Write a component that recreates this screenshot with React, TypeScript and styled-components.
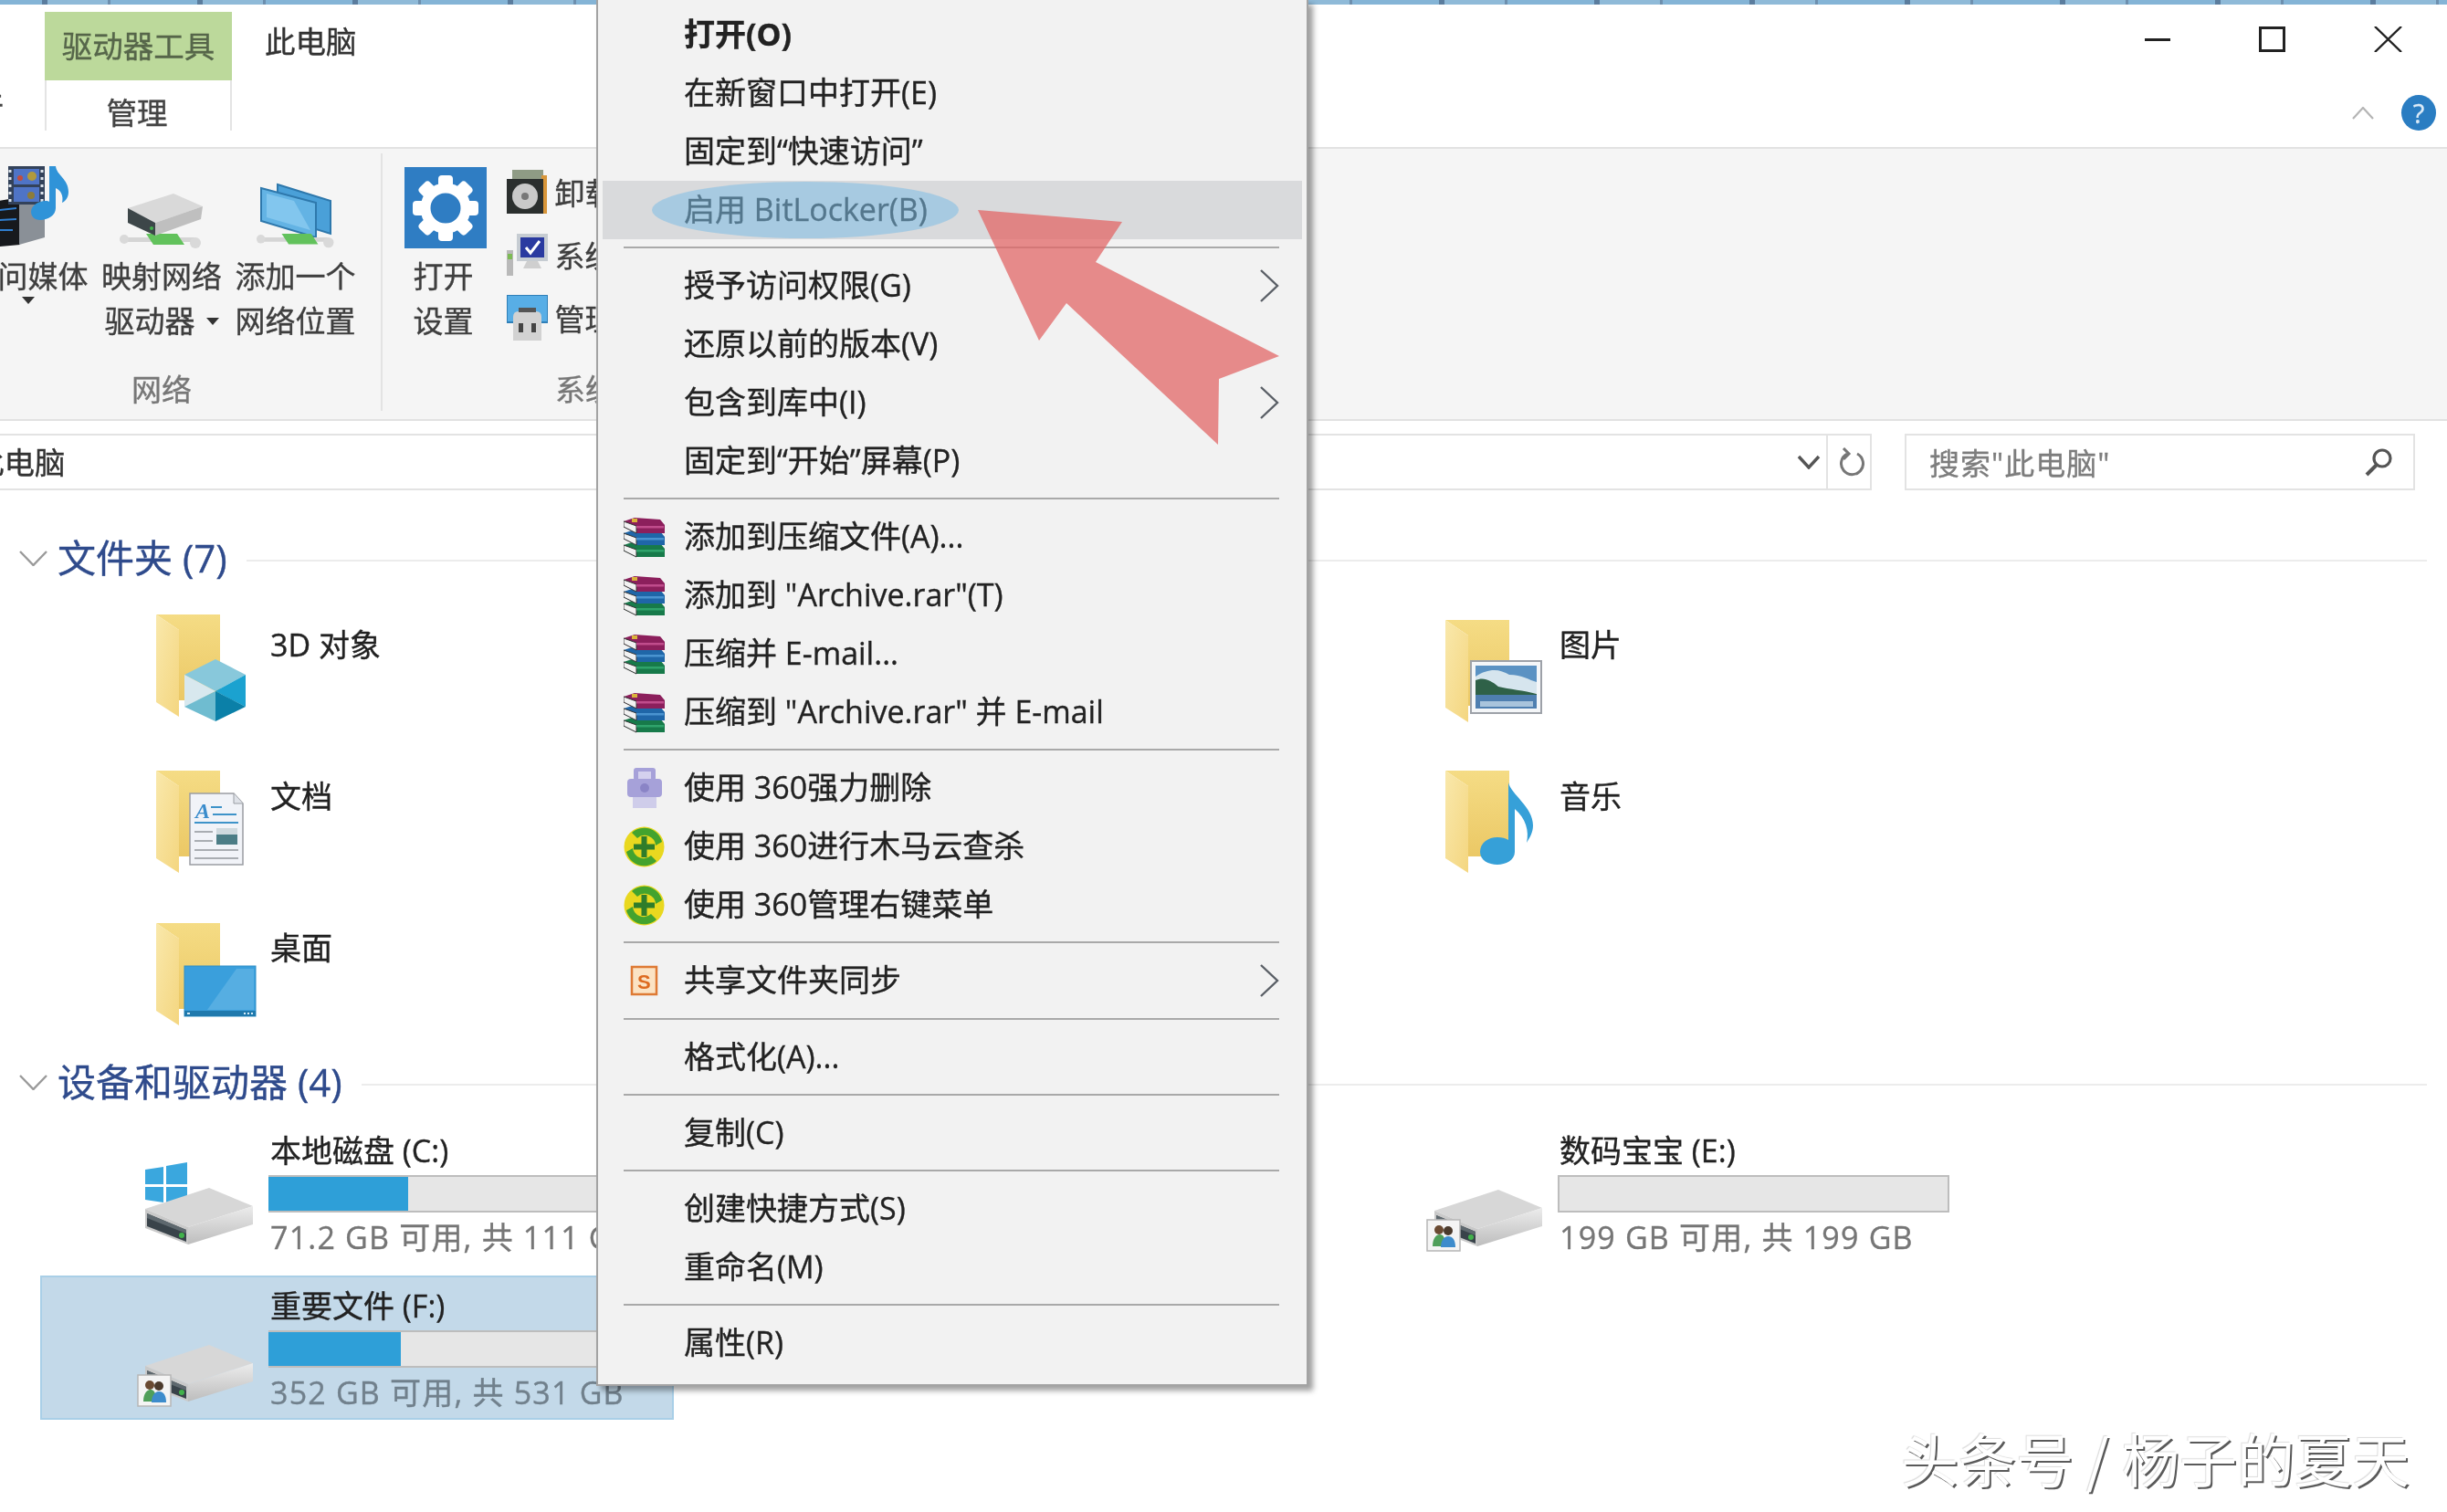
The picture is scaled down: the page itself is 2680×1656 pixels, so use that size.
import React from "react";
import styled, { createGlobalStyle } from "styled-components";

const Global = createGlobalStyle`
  html, body { margin: 0; padding: 0; background: #fff; width: 2680px; height: 1656px; overflow: hidden; }
  * { box-sizing: border-box; }
`;

const Page = styled.div`
  position: relative;
  width: 2680px;
  height: 1656px;
  overflow: hidden;
  background: #fff;
  font-family: "Open Sans", "Noto Sans CJK SC", sans-serif;
  font-size: 33.5px;
  color: #2c2c2c;
`;
const Screen = styled.div`
  position: relative;
  width: 2680px;
  height: 1656px;
  overflow: hidden;
  filter: blur(0.7px);
  -webkit-text-stroke: 0.35px currentColor;
`;
const TopStrip = styled.div`
  height: 5px;
  background: repeating-linear-gradient(90deg, #84b4d6 0 46px, #5b7d9e 46px 52px, #8fbad8 52px 118px, #6d8fae 118px 121px, #84b4d6 121px 170px);
`;

/* title row */
const TitleRow = styled.div`
  height: 156px;
  display: flex;
  align-items: flex-start;
  background: #fff;
`;
const LeftStub = styled.div`
  width: 49px;
  height: 138px;
  display: flex;
  align-items: flex-end;
  overflow: hidden;
`;
const StubText = styled.span`
  margin-left: -63px;
  line-height: 62px;
  white-space: nowrap;
  color: #444;
`;
const ContextTab = styled.div`
  width: 205px;
  margin-top: 8px;
  display: flex;
  flex-direction: column;
`;
const ContextHead = styled.div`
  height: 75px;
  background: #bcd99b;
  color: #56664a;
  text-align: center;
  line-height: 74px;
`;
const ContextBody = styled.div`
  height: 55px;
  border: solid #e4e4e4;
  border-width: 0 2px;
  padding-right: 3px;
  text-align: center;
  color: #444;
  line-height: 70px;
`;
const PlainTab = styled.div`
  margin: 18px 0 0 36px;
  line-height: 44px;
  color: #333;
`;
const TitleRight = styled.div`
  margin-left: auto;
  display: flex;
  flex-direction: column;
  align-items: flex-end;
  padding-top: 24px;
`;
const WindowControls = styled.div`
  display: flex;
  align-items: center;
  gap: 97px;
  margin-right: 49px;
`;
const RibbonTools = styled.div`
  display: flex;
  align-items: center;
  gap: 30px;
  margin: 47px 12px 0 0;
`;
const HelpDot = styled.div`
  width: 38px;
  height: 39px;
  border-radius: 50%;
  background: #2a7dc2;
  color: #dcebf7;
  font-size: 29px;
  line-height: 39px;
  text-align: center;
`;

/* ribbon */
const Ribbon = styled.div`
  height: 300px;
  display: flex;
  align-items: stretch;
  background: #f5f5f5;
  border: solid #e2e2e2;
  border-width: 2px 0;
  color: #3f3f3f;
  font-size: 33px;
  overflow: hidden;
`;
const Group = styled.div<{ $w: number; $ml?: number; $pl: number }>`
  flex: none;
  width: ${(p) => p.$w}px;
  margin-left: ${(p) => p.$ml ?? 0}px;
  padding: 9px 0 12px ${(p) => p.$pl}px;
  display: flex;
  flex-direction: column;
`;
const GroupRow = styled.div`
  display: flex;
  align-items: flex-start;
  gap: 15.5px;
`;
const GroupLabel = styled.div<{ $center?: boolean }>`
  margin-top: auto;
  line-height: 40px;
  color: #777;
  align-self: ${(p) => (p.$center ? "stretch" : "flex-start")};
  text-align: ${(p) => (p.$center ? "center" : "left")};
  margin-left: ${(p) => (p.$center ? "-28px" : "165px")};
`;
const GroupDivider = styled.div`
  flex: none;
  width: 2px;
  margin: 5px 0 9px;
  background: #e3e3e3;
`;
const RibbonBtn = styled.div<{ $w: number }>`
  flex: none;
  width: ${(p) => p.$w}px;
  display: flex;
  flex-direction: column;
  align-items: center;
`;
const IconSlot = styled.div`
  height: 100px;
  display: flex;
  align-items: flex-end;
  justify-content: center;
`;
const BtnLines = styled.div<{ $nudge?: number }>`
  margin-top: 6px;
  margin-right: ${(p) => p.$nudge ?? 0}px;
  line-height: 49px;
  text-align: center;
  white-space: nowrap;
`;
const Caret = styled.span<{ $block?: boolean }>`
  display: ${(p) => (p.$block ? "block" : "inline-block")};
  width: 0;
  height: 0;
  border: solid transparent;
  border-width: 8px 7px 0;
  border-top-color: #333;
  margin: ${(p) => (p.$block ? "-2px auto 0" : "0 0 6px 12px")};
  vertical-align: middle;
`;
const SmallList = styled.div`
  margin: 3px 0 0 6px;
  display: flex;
  flex-direction: column;
`;
const SmallItem = styled.div`
  height: 69px;
  display: flex;
  align-items: center;
  gap: 8px;
  white-space: nowrap;
`;

/* nav */
const NavRow = styled.div`
  height: 90px;
  padding: 14px 35px 0 0;
  display: flex;
  align-items: flex-start;
  gap: 36px;
  background: #fff;
`;
const AddressBox = styled.div`
  width: 2050px;
  height: 62px;
  display: flex;
  align-items: center;
  border: 2px solid #e3e3e3;
  border-left: 0;
  overflow: hidden;
`;
const Crumb = styled.div`
  margin: -3px 0 0 -29px;
  white-space: nowrap;
  color: #333;
`;
const AddressChevron = styled.div`
  margin-left: auto;
  margin-right: 6px;
  display: flex;
`;
const RefreshCell = styled.div`
  width: 48px;
  height: 100%;
  padding-left: 6px;
  border-left: 2px solid #e3e3e3;
  display: flex;
  align-items: center;
  justify-content: center;
`;
const SearchBox = styled.div`
  width: 559px;
  height: 62px;
  border: 2px solid #e3e3e3;
  padding: 0 22px 0 25px;
  display: flex;
  align-items: center;
  justify-content: space-between;
  color: #7d7d7d;
  font-size: 33px;
  letter-spacing: 1px;
`;

/* content */
const Content = styled.div`
  padding-top: 35px;
  background: #fff;
`;
const SectionHead = styled.div`
  height: 50px;
  display: flex;
  align-items: center;
  padding: 0 22px 0 21px;
  gap: 11px;
`;
const SectionTitle = styled.div`
  font-size: 42px;
  line-height: 50px;
  color: #2f4b8c;
  white-space: nowrap;
`;
const SectionRule = styled.div`
  flex: 1;
  height: 2px;
  margin: 6px 0 0 10px;
  background: #ececec;
`;
const TileGrid = styled.div<{ $mt: number; $row: number; $gap: number }>`
  margin-top: ${(p) => p.$mt}px;
  padding-left: 44px;
  display: grid;
  grid-template-columns: repeat(3, 694px);
  grid-auto-rows: ${(p) => p.$row}px;
  column-gap: 12px;
  row-gap: ${(p) => p.$gap}px;
`;
const FolderTile = styled.div`
  display: flex;
  align-items: flex-start;
  padding: 9px 0 0 127px;
  gap: 5px;
`;
const TileName = styled.div`
  line-height: 44px;
  margin-top: 13px;
  font-size: 34px;
  white-space: nowrap;
  color: #222;
`;
const DriveTile = styled.div<{ $selected?: boolean }>`
  display: flex;
  align-items: flex-start;
  padding: 9px 0 0 103px;
  gap: 15px;
  background: ${(p) => (p.$selected ? "#c3d9e9" : "transparent")};
  border: 2px solid ${(p) => (p.$selected ? "#a9cfe7" : "transparent")};
`;
const DriveIconWrap = styled.div`
  margin-top: 35px;
  display: flex;
`;
const DriveInfo = styled.div`
  width: 429px;
`;
const DriveName = styled.div`
  line-height: 44px;
  padding-left: 2px;
  font-size: 34px;
  white-space: nowrap;
  color: #222;
`;
const UsageBar = styled.div`
  height: 41px;
  margin-top: 5px;
  background: #e6e6e6;
  border: 2px solid #bdbdbd;
`;
const UsageFill = styled.div`
  height: 100%;
  margin: 0 0 0 -2px;
  background: #2e9fd8;
`;
const DriveStats = styled.div<{ $selected?: boolean }>`
  line-height: 44px;
  margin-top: 5px;
  padding-left: 2px;
  font-size: 34px;
  letter-spacing: 1.2px;
  white-space: nowrap;
  color: ${(p) => (p.$selected ? "#71808c" : "#767676")};
`;

/* context menu */
const Menu = styled.div`
  position: absolute;
  left: 653px;
  top: 0;
  width: 780px;
  padding: 6px 5px 13px;
  background: #f2f2f2;
  border: solid #a3a3a3;
  border-width: 0 2px 2px;
  box-shadow: 5px 5px 6px rgba(0, 0, 0, 0.38);
  color: #222;
  font-size: 34px;
`;
const MenuRow = styled.div<{ $hover?: boolean; $bold?: boolean }>`
  height: 64px;
  display: flex;
  align-items: center;
  padding: 0 25px 0 23px;
  background: ${(p) => (p.$hover ? "#d9dadc" : "transparent")};
  font-weight: ${(p) => (p.$bold ? 700 : 400)};
  white-space: nowrap;
`;
const MenuLabel = styled.span`
  line-height: 44px;
  margin-top: -3px;
`;
const MenuIcon = styled.div`
  flex: none;
  width: 45px;
  height: 45px;
  margin-right: 21px;
  display: flex;
  align-items: center;
  justify-content: center;
`;
const MenuArrow = styled.div`
  margin-left: auto;
  display: flex;
`;
const MenuSep = styled.div<{ $extra?: number }>`
  height: 2px;
  margin: ${(p) => 8 + (p.$extra ?? 0)}px 25px 9px 23px;
  background: #a9a9a9;
`;
const Annotation = styled.svg`
  position: absolute;
  left: 0;
  top: 0;
  pointer-events: none;
`;
const Watermark = styled.div`
  position: absolute;
  left: 2082px;
  top: 1557px;
  font-family: "Noto Sans CJK SC", sans-serif;
  font-size: 63px;
  line-height: 78px;
  white-space: nowrap;
  color: #fff;
  text-shadow: 2px 2px 0 #5a5a5a, -1px -1px 1px #dcdcdc;
`;

/* drawings */
const FolderSvg: React.FC<{ drop: number; children?: React.ReactNode; id: string }> = ({ drop, children, id }) => (
  <svg width="120" height="125" viewBox="0 0 120 125">
    <defs>
      <linearGradient id={id + "-back"} x1="0" x2="0" y1="0" y2="1">
        <stop offset="0" stopColor="#f5dc85" />
        <stop offset="1" stopColor="#ebc865" />
      </linearGradient>
      <linearGradient id={id + "-flap"} x1="0" x2="1" y1="0" y2="1">
        <stop offset="0" stopColor="#f9e8ab" />
        <stop offset="1" stopColor="#f4d680" />
      </linearGradient>
    </defs>
    <g transform={`translate(0 ${drop})`}>
      <polygon points="0,0 70,0 70,94 25,94 25,17" fill={`url(#${id}-back)`} />
      <polygon points="0,0 25,17 25,112 0,96" fill={`url(#${id}-flap)`} />
      {children}
    </g>
  </svg>
);
const Cube = () => (
  <g>
    <polygon points="65,49 98,66 65,84 31,66" fill="#88c8db" />
    <polygon points="31,66 65,84 48,93 31,101" fill="#d8e8ee" />
    <polygon points="98,66 98,101 82,93 65,84" fill="#1ba2d0" />
    <polygon points="31,101 65,84 65,117" fill="#6fbcd0" />
    <polygon points="98,101 65,84 65,117" fill="#0b80a8" />
  </g>
);
const DocOverlay = () => (
  <g>
    <path d="M37 25 H85 L95 36 V103 H37 Z" fill="#f1f3f8" stroke="#9a9da3" strokeWidth="1.5" />
    <path d="M85 25 V36 H95" fill="#dfe2e8" stroke="#9a9da3" strokeWidth="1" />
    <text x="43" y="52" fontFamily="Liberation Serif, serif" fontStyle="italic" fontWeight="700" fontSize="24" fill="#3a8ccc" stroke="none">A</text>
    <path d="M60 40 H72 M62 48 H88 M42 57 H90" stroke="#3e93c9" strokeWidth="2" />
    <path d="M42 67 H62 M42 77 H62 M42 87 H90 M42 96 H90" stroke="#a9adb2" strokeWidth="1.8" />
    <rect x="66" y="63" width="23" height="18" fill="#4c7d86" />
    <rect x="66" y="63" width="23" height="7" fill="#cfd9de" />
  </g>
);
const DesktopOverlay = () => (
  <g>
    <rect x="31" y="47" width="78" height="55" fill="#3a9fdc" stroke="#2f8dc6" />
    <polygon points="56,95 88,50 107,50 107,95" fill="#56aee2" />
    <rect x="31" y="96" width="78" height="6" fill="#1f79ad" />
    <path d="M34 99h3M96 99h2M100 99h2M104 99h2" stroke="#d6ecf8" strokeWidth="2" />
  </g>
);
const PictureOverlay = () => (
  <g>
    <rect x="28" y="45" width="77" height="57" fill="#f4f6f8" stroke="#9da1a8" strokeWidth="2" />
    <rect x="33" y="50" width="67" height="30" fill="#5b92c3" />
    <path d="M33 62 C48 52 60 54 70 60 C84 60 92 66 100 68 V80 H33 Z" fill="#d6e5ee" />
    <path d="M33 66 C42 62 50 66 58 73 C70 76 86 77 100 81 V82 H33 Z" fill="#2f6148" />
    <rect x="33" y="82" width="67" height="15" fill="#4f7fb0" />
    <rect x="38" y="89" width="58" height="6" fill="#a9c4dc" />
  </g>
);
const NoteOverlay = () => (
  <path d="M69 13 C72 26 96 40 96 60 C96 68 92 74 89 79 C92 66 88 52 76 42 L76 89 C76 98 66 103 57 103 C47 103 38 98 38 89 C38 79 47 73 57 73 C62 73 66 74 69 76 Z" fill="#36a0d8" />
);
const DriveBody: React.FC<{ x: number; y: number; id: string }> = ({ x, y, id }) => (
  <g transform={`translate(${x} ${y})`}>
    <defs>
      <linearGradient id={id} x1="0" x2="0" y1="0" y2="1">
        <stop offset="0" stopColor="#ececec" />
        <stop offset="1" stopColor="#bdbdbd" />
      </linearGradient>
    </defs>
    <polygon points="0,23 70,0 118,20 47,43" fill="#d7d7d7" />
    <polygon points="47,43 118,20 118,40 47,62" fill={`url(#${id})`} />
    <polygon points="0,23 47,43 47,62 0,44" fill="#c9c9c9" />
    <polygon points="2,28 45,46 45,59 2,42" fill="#39434a" />
    <polygon points="2,28 45,46 45,50 2,33" fill="#5e686e" />
    <circle cx="40" cy="52" r="3" fill="#41b24b" />
  </g>
);
const PeopleBadge = () => (
  <g transform="translate(2 63)">
    <rect x="0" y="0" width="36" height="34" fill="#f4f4f4" stroke="#b7b7b7" strokeWidth="1.5" />
    <circle cx="13" cy="11" r="5" fill="#6a4a32" />
    <circle cx="23" cy="12" r="5" fill="#4b3a2c" />
    <path d="M6 29 C6 20 10 16 14 16 C18 16 20 20 20 29 Z" fill="#4f9f5a" />
    <path d="M15 30 C15 22 19 18 23 18 C28 18 31 22 31 30 Z" fill="#3d8ccc" />
  </g>
);
const SystemDrive = () => (
  <svg width="130" height="100" viewBox="0 0 130 100">
    <g fill="#3aa7de">
      <polygon points="10,8 30,5 30,24 10,24" />
      <polygon points="33,4 56,0 56,24 33,24" />
      <polygon points="10,27 30,27 30,44 10,41" />
      <polygon points="33,27 56,27 56,50 33,46" />
    </g>
    <DriveBody x={10} y={28} id="drive-grad-c" />
  </svg>
);
const SharedDrive: React.FC<{ id: string }> = ({ id }) => (
  <svg width="130" height="100" viewBox="0 0 130 100">
    <DriveBody x={10} y={30} id={id} />
    <PeopleBadge />
  </svg>
);
const NetPipe = () => (
  <g>
    <rect x="8" y="42" width="76" height="5" rx="2" fill="#d5d5d5" />
    <polygon points="30,38 64,38 72,50 38,50" fill="#62c25c" />
    <circle cx="6" cy="44" r="5" fill="#d9d9d9" />
    <circle cx="84" cy="48" r="6" fill="#d9d9d9" />
  </g>
);
const MediaIcon = () => (
  <svg width="110" height="90" viewBox="0 0 110 90">
    <polygon points="0,42 46,34 46,86 0,90" fill="#17191d" />
    <polygon points="45,38 73,38 73,78 45,86" fill="#8a9097" />
    <path d="M4 50 L42 46 M4 60 L42 58 M4 70 L38 70" stroke="#2f7ed0" strokeWidth="2" />
    <rect x="33" y="0" width="40" height="42" fill="#33425a" />
    <rect x="39" y="3" width="28" height="17" fill="#4f74c6" />
    <rect x="39" y="23" width="28" height="16" fill="#4f74c6" />
    <circle cx="59" cy="11" r="5" fill="#b19a3c" />
    <circle cx="46" cy="13" r="3" fill="#c24d3e" />
    <circle cx="58" cy="32" r="4" fill="#8d7c3a" />
    <path d="M35 4v3M35 12v3M35 20v3M35 28v3M35 36v3M70 4v3M70 12v3M70 20v3M70 28v3M70 36v3" stroke="#dfe6ee" strokeWidth="3" />
    <path d="M78 0 H85 C86 10 99 14 99 28 C99 34 96 38 92 40 C94 32 90 26 85 24 L85 46 C85 54 76 59 68 59 C62 59 58 55 58 50 C58 43 66 38 74 38 C76 38 77 38 78 39 Z" fill="#2f93d8" />
  </svg>
);
const MapDriveIcon = () => (
  <svg width="94" height="60" viewBox="0 0 94 60">
    <g transform="translate(0 6)"><NetPipe /></g>
    <polygon points="10,16 60,0 92,14 40,32" fill="#d9d9d9" />
    <polygon points="40,32 92,14 90,28 40,46" fill="#bfbfbf" />
    <polygon points="10,16 40,32 40,46 10,32" fill="#3d4649" />
    <circle cx="36" cy="38" r="2" fill="#41b24b" />
  </svg>
);
const AddNetIcon = () => (
  <svg width="92" height="72" viewBox="0 0 92 72">
    <g transform="translate(4 0)">
      <polygon points="22,2 80,20 80,56 22,38" fill="#4aa0d8" stroke="#2e78ac" strokeWidth="2" />
      <polygon points="4,6 64,22 64,60 4,42" fill="#63b3e4" stroke="#2e78ac" strokeWidth="2" />
      <polygon points="10,12 40,20 58,52 10,38" fill="#82c6ee" />
    </g>
    <g transform="translate(2 20) scale(0.95)"><NetPipe /></g>
  </svg>
);
const SettingsIcon = () => {
  const teeth = [0, 45, 90, 135, 180, 225, 270, 315];
  return (
    <svg width="90" height="89" viewBox="0 0 90 89">
      <rect width="90" height="89" fill="#2f7dc3" />
      <g transform="translate(45 45)">
        {teeth.map((a) => (
          <rect key={a} x="-8" y="-36" width="16" height="18" rx="4" fill="#fff" transform={`rotate(${a})`} />
        ))}
        <circle r="22" fill="none" stroke="#fff" strokeWidth="11" />
        <circle r="16" fill="#2f7dc3" />
      </g>
    </svg>
  );
};
const CdIcon = () => (
  <svg width="45" height="48" viewBox="0 0 45 48">
    <rect x="6" y="0" width="34" height="12" fill="#8f9b85" />
    <rect x="38" y="6" width="6" height="42" fill="#d8963a" />
    <rect x="0" y="10" width="40" height="38" fill="#2b2f2e" />
    <circle cx="20" cy="29" r="14" fill="#c9c9c9" />
    <circle cx="20" cy="29" r="4" fill="#777" />
  </svg>
);
const SysIcon = () => (
  <svg width="45" height="46" viewBox="0 0 45 46">
    <rect x="0" y="18" width="7" height="28" fill="#b9b9b9" />
    <rect x="1" y="22" width="5" height="6" fill="#7dbb54" />
    <rect x="11" y="0" width="34" height="30" fill="#c6ccd2" />
    <rect x="15" y="4" width="26" height="22" fill="#2a3aa0" />
    <path d="M21 15 L26 21 L36 8" fill="none" stroke="#fff" strokeWidth="3" />
    <polygon points="22,30 34,30 38,38 18,38" fill="#cfcfcf" />
  </svg>
);
const ManageIcon = () => (
  <svg width="45" height="50" viewBox="0 0 45 50">
    <rect x="0" y="0" width="45" height="30" fill="#58aee6" stroke="#2f7fb8" strokeWidth="2" />
    <path d="M7 50 V24 Q7 18 13 18 H32 Q38 18 38 24 V50 Z" fill="#d2d2d2" />
    <rect x="13" y="14" width="19" height="5" fill="#555" />
    <rect x="13" y="31" width="5" height="10" fill="#444" />
    <rect x="27" y="31" width="5" height="10" fill="#444" />
  </svg>
);
const RarIcon = () => (
  <svg width="45" height="45" viewBox="0 0 45 45">
    {[
      { y: 27, c: "#177a4a", l: "#2fa36b" },
      { y: 14, c: "#1f66a8", l: "#4a93d0" },
      { y: 1, c: "#8c1f5c", l: "#c04c8c" },
    ].map((b) => (
      <g key={b.y} transform={`translate(0 ${b.y})`}>
        <polygon points="0,4 12,0 40,2 45,8 45,17 14,17 0,10" fill={b.c} />
        <polygon points="0,4 14,9 14,17 0,10" fill="#f2f2f2" stroke="#333" strokeWidth="1" />
        <rect x="14" y="9" width="30" height="2.5" fill={b.l} />
      </g>
    ))}
    <rect x="9" y="2" width="6" height="4" fill="#d9b23a" />
  </svg>
);
const ShredIcon = () => (
  <svg width="42" height="45" viewBox="0 0 42 45">
    <g fill="#a6a1d9">
      <rect x="9" y="0" width="24" height="14" rx="3" />
      <rect x="2" y="12" width="38" height="20" rx="4" />
      <rect x="8" y="32" width="26" height="12" fill="#cfcdea" />
    </g>
    <rect x="14" y="4" width="14" height="8" fill="#d4d1ee" />
    <circle cx="21" cy="22" r="5" fill="#8a84c6" />
  </svg>
);
const SafeIcon = () => (
  <svg width="45" height="45" viewBox="0 0 45 45">
    <circle cx="22.5" cy="22.5" r="22" fill="#e9d81f" />
    <path d="M3 28 A20 20 0 0 0 36 38 L30 32 A12 12 0 0 1 10 24 Z" fill="#43a32e" />
    <path d="M42 17 A20 20 0 0 0 9 7 L15 13 A12 12 0 0 1 35 21 Z" fill="#43a32e" />
    <path d="M22.5 11 V34 M11 22.5 H34" stroke="#2f7d2a" strokeWidth="6" />
  </svg>
);
const WpsIcon = () => (
  <svg width="34" height="40" viewBox="0 0 34 40">
    <rect x="3" y="5" width="27" height="30" fill="#fbe3c4" stroke="#de7a34" strokeWidth="2.5" />
    <text x="9" y="29" fontFamily="Liberation Sans, sans-serif" fontWeight="700" fontSize="22" fill="#dd6a1f" stroke="none">S</text>
  </svg>
);
const SubArrow = () => (
  <svg width="22" height="36" viewBox="0 0 22 36">
    <polyline points="2,1 20,18 2,35" fill="none" stroke="#5a5f66" strokeWidth="2.4" />
  </svg>
);
const SectionChevron = () => (
  <svg width="31" height="17" viewBox="0 0 31 17">
    <polyline points="1,1 15.5,16 30,1" fill="none" stroke="#9a9a9a" strokeWidth="2.4" />
  </svg>
);

const menuGroups: { label: string; bold?: boolean; hover?: boolean; arrow?: boolean; icon?: React.ReactNode }[][] = [
  [{ label: "打开(O)", bold: true }, { label: "在新窗口中打开(E)" }, { label: "固定到“快速访问”" }, { label: "启用 BitLocker(B)", hover: true }],
  [{ label: "授予访问权限(G)", arrow: true }, { label: "还原以前的版本(V)" }, { label: "包含到库中(I)", arrow: true }, { label: "固定到“开始”屏幕(P)" }],
  [
    { label: "添加到压缩文件(A)...", icon: <RarIcon /> },
    { label: '添加到 "Archive.rar"(T)', icon: <RarIcon /> },
    { label: "压缩并 E-mail...", icon: <RarIcon /> },
    { label: '压缩到 "Archive.rar" 并 E-mail', icon: <RarIcon /> },
  ],
  [
    { label: "使用 360强力删除", icon: <ShredIcon /> },
    { label: "使用 360进行木马云查杀", icon: <SafeIcon /> },
    { label: "使用 360管理右键菜单", icon: <SafeIcon /> },
  ],
  [{ label: "共享文件夹同步", arrow: true, icon: <WpsIcon /> }],
  [{ label: "格式化(A)..." }],
  [{ label: "复制(C)" }],
  [{ label: "创建快捷方式(S)" }, { label: "重命名(M)" }],
  [{ label: "属性(R)" }],
];

const ContextMenu = () => (
  <Menu>
    {menuGroups.map((group, g) => (
      <React.Fragment key={g}>
        {g > 0 && <MenuSep $extra={g === 5 ? 1 : 0} />}
        {group.map((item) => (
          <MenuRow key={item.label} $hover={item.hover} $bold={item.bold}>
            <MenuIcon>{item.icon}</MenuIcon>
            <MenuLabel>{item.label}</MenuLabel>
            {item.arrow && (
              <MenuArrow>
                <SubArrow />
              </MenuArrow>
            )}
          </MenuRow>
        ))}
      </React.Fragment>
    ))}
  </Menu>
);

const Drive: React.FC<{ name: string; stats: string; pct: number; selected?: boolean; icon: React.ReactNode }> = ({ name, stats, pct, selected, icon }) => (
  <DriveTile $selected={selected}>
    <DriveIconWrap>{icon}</DriveIconWrap>
    <DriveInfo>
      <DriveName>{name}</DriveName>
      <UsageBar>
        {pct > 0 && <UsageFill style={{ width: `${pct}%` }} />}
      </UsageBar>
      <DriveStats $selected={selected}>{stats}</DriveStats>
    </DriveInfo>
  </DriveTile>
);

export default function App() {
  return (
    <Page>
      <Global />
      <Screen>
        <TopStrip />
        <TitleRow>
          <LeftStub>
            <StubText>文件</StubText>
          </LeftStub>
          <ContextTab>
            <ContextHead>驱动器工具</ContextHead>
            <ContextBody>管理</ContextBody>
          </ContextTab>
          <PlainTab>此电脑</PlainTab>
          <TitleRight>
            <WindowControls>
              <svg width="28" height="28" viewBox="0 0 28 28"><rect x="0" y="13" width="28" height="3" fill="#222" /></svg>
              <svg width="29" height="28" viewBox="0 0 29 28"><rect x="1.5" y="1.5" width="26" height="25" fill="none" stroke="#222" strokeWidth="3" /></svg>
              <svg width="31" height="28" viewBox="0 0 31 28"><path d="M1 0 L30 28 M30 0 L1 28" stroke="#222" strokeWidth="2.4" /></svg>
            </WindowControls>
            <RibbonTools>
              <svg width="24" height="14" viewBox="0 0 24 14"><polyline points="1,13 12,1 23,13" fill="none" stroke="#b5b5b5" strokeWidth="2.2" /></svg>
              <HelpDot>?</HelpDot>
            </RibbonTools>
          </TitleRight>
        </TitleRow>

        <Ribbon>
          <Group $w={480} $ml={-63} $pl={28}>
            <GroupRow>
              <RibbonBtn $w={131}>
                <IconSlot><MediaIcon /></IconSlot>
                <BtnLines>访问媒体<Caret $block /></BtnLines>
              </RibbonBtn>
              <RibbonBtn $w={131}>
                <IconSlot><MapDriveIcon /></IconSlot>
                <BtnLines>映射网络<br />驱动器<Caret /></BtnLines>
              </RibbonBtn>
              <RibbonBtn $w={131}>
                <IconSlot><AddNetIcon /></IconSlot>
                <BtnLines>添加一个<br />网络位置</BtnLines>
              </RibbonBtn>
            </GroupRow>
            <GroupLabel $center>网络</GroupLabel>
          </Group>
          <GroupDivider />
          <Group $w={444} $pl={24}>
            <GroupRow>
              <RibbonBtn $w={90}>
                <IconSlot><SettingsIcon /></IconSlot>
                <BtnLines $nudge={5}>打开<br />设置</BtnLines>
              </RibbonBtn>
              <SmallList>
                <SmallItem><CdIcon />卸载或更改程序</SmallItem>
                <SmallItem><SysIcon />系统属性</SmallItem>
                <SmallItem><ManageIcon />管理</SmallItem>
              </SmallList>
            </GroupRow>
            <GroupLabel>系统</GroupLabel>
          </Group>
        </Ribbon>

        <NavRow>
          <AddressBox>
            <Crumb>此电脑</Crumb>
            <AddressChevron>
              <svg width="26" height="16" viewBox="0 0 26 16"><polyline points="2,2 13,14 24,2" fill="none" stroke="#555" strokeWidth="3.4" /></svg>
            </AddressChevron>
            <RefreshCell>
              <svg width="28" height="32" viewBox="0 0 28 32"><path d="M20 7 A12 12 0 1 1 9 7" fill="none" stroke="#777" strokeWidth="3" /><polyline points="5,1 11,7 5,13" fill="none" stroke="#777" strokeWidth="3" /></svg>
            </RefreshCell>
          </AddressBox>
          <SearchBox>
            搜索"此电脑"
            <svg width="32" height="32" viewBox="0 0 32 32"><circle cx="20" cy="12" r="9" fill="none" stroke="#555" strokeWidth="3.2" /><path d="M14 19 L3 30" stroke="#555" strokeWidth="4" /></svg>
          </SearchBox>
        </NavRow>

        <Content>
          <SectionHead>
            <SectionChevron />
            <SectionTitle>文件夹 (7)</SectionTitle>
            <SectionRule />
          </SectionHead>
          <TileGrid $mt={26} $row={166} $gap={0}>
            <FolderTile>
              <FolderSvg id="f3d" drop={2}><Cube /></FolderSvg>
              <TileName>3D 对象</TileName>
            </FolderTile>
            <FolderTile />
            <FolderTile>
              <FolderSvg id="fpic" drop={8}><PictureOverlay /></FolderSvg>
              <TileName>图片</TileName>
            </FolderTile>
            <FolderTile>
              <FolderSvg id="fdoc" drop={7}><DocOverlay /></FolderSvg>
              <TileName>文档</TileName>
            </FolderTile>
            <FolderTile />
            <FolderTile>
              <FolderSvg id="fmus" drop={7}><NoteOverlay /></FolderSvg>
              <TileName>音乐</TileName>
            </FolderTile>
            <FolderTile>
              <FolderSvg id="fdesk" drop={8}><DesktopOverlay /></FolderSvg>
              <TileName>桌面</TileName>
            </FolderTile>
          </TileGrid>

          <SectionHead>
            <SectionChevron />
            <SectionTitle>设备和驱动器 (4)</SectionTitle>
            <SectionRule />
          </SectionHead>
          <TileGrid $mt={17} $row={158} $gap={12}>
            <Drive name="本地磁盘 (C:)" stats="71.2 GB 可用, 共 111 GB" pct={36} icon={<SystemDrive />} />
            <FolderTile />
            <Drive name="数码宝宝 (E:)" stats="199 GB 可用, 共 199 GB" pct={0} icon={<SharedDrive id="drive-grad-e" />} />
            <Drive selected name="重要文件 (F:)" stats="352 GB 可用, 共 531 GB" pct={34} icon={<SharedDrive id="drive-grad-f" />} />
          </TileGrid>
        </Content>

        <ContextMenu />

        <Annotation width="2680" height="1656" viewBox="0 0 2680 1656">
          <ellipse cx="882" cy="230" rx="168" ry="31" fill="rgb(125,190,230)" fillOpacity="0.55" stroke="none" />
          <polygon points="1071,230 1229,243 1200,287 1401,390 1335,415 1334,487 1168,332 1138,373" fill="rgb(225,103,103)" fillOpacity="0.75" stroke="none" />
        </Annotation>
      </Screen>
      <Watermark>头条号 / 杨子的夏天</Watermark>
    </Page>
  );
}
